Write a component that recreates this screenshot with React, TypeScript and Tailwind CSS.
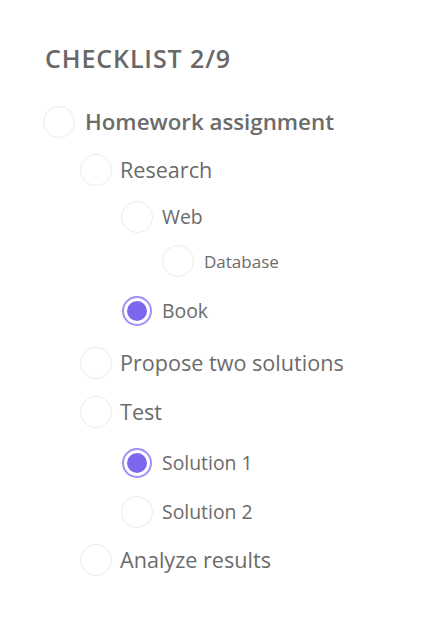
import React from 'react'

type Item = {
  label: string
  level: number
  done?: boolean
  gap: string
}

const items: Item[] = [
  { label: 'Homework assignment', level: 0, gap: 'mt-0', },
  { label: 'Research', level: 1, gap: 'mt-[16px]' },
  { label: 'Web', level: 2, gap: 'mt-[15px]' },
  { label: 'Database', level: 3, gap: 'mt-[12px]' },
  { label: 'Book', level: 2, done: true, gap: 'mt-[18px]' },
  { label: 'Propose two solutions', level: 1, gap: 'mt-[20px]' },
  { label: 'Test', level: 1, gap: 'mt-[17px]' },
  { label: 'Solution 1', level: 2, done: true, gap: 'mt-[19px]' },
  { label: 'Solution 2', level: 2, gap: 'mt-[17px]' },
  { label: 'Analyze results', level: 1, gap: 'mt-[16px]' },
]

const indent = ['ml-0', 'ml-[37px]', 'ml-[78px]', 'ml-[119px]']
const gapX = ['gap-[10px]', 'gap-[8px]', 'gap-[9px]', 'gap-[10px]']
const textSize = [
  'text-[22.3px] font-semibold',
  'text-[21.6px]',
  'text-[19.4px]',
  'text-[17px]',
]

function Check({ done }: { done?: boolean }) {
  if (done) {
    return (
      <div className="w-8 h-8 shrink-0 flex items-center justify-center">
        <div className="w-[30px] h-[30px] rounded-full border-2 border-[#9d90f3] flex items-center justify-center">
          <div className="w-[20px] h-[20px] rounded-full bg-[#7b68ee]" />
        </div>
      </div>
    )
  }
  return <div className="w-8 h-8 shrink-0 rounded-full border border-[#ececec] bg-white" />
}

export default function App() {
  return (
    <div className="min-h-[630px] w-full bg-white pl-[43px] pt-[44px]" style={{ fontFamily: '"Open Sans", "Liberation Sans", sans-serif' }}>
      <h1 className="text-[25px] font-semibold text-[#686868] leading-[28px] ml-[2px] tracking-[0.9px]">CHECKLIST 2/9</h1>
      <div className="flex flex-col mt-[34px]">
        {items.map((it, i) => (
          <div key={i} className={`flex items-center ${gapX[it.level]} ${it.gap} ${indent[it.level]}`}>
            <Check done={it.done} />
            <span className={`text-[#6b6b6b] leading-none ${textSize[it.level]}`}>{it.label}</span>
          </div>
        ))}
      </div>
    </div>
  )
}
